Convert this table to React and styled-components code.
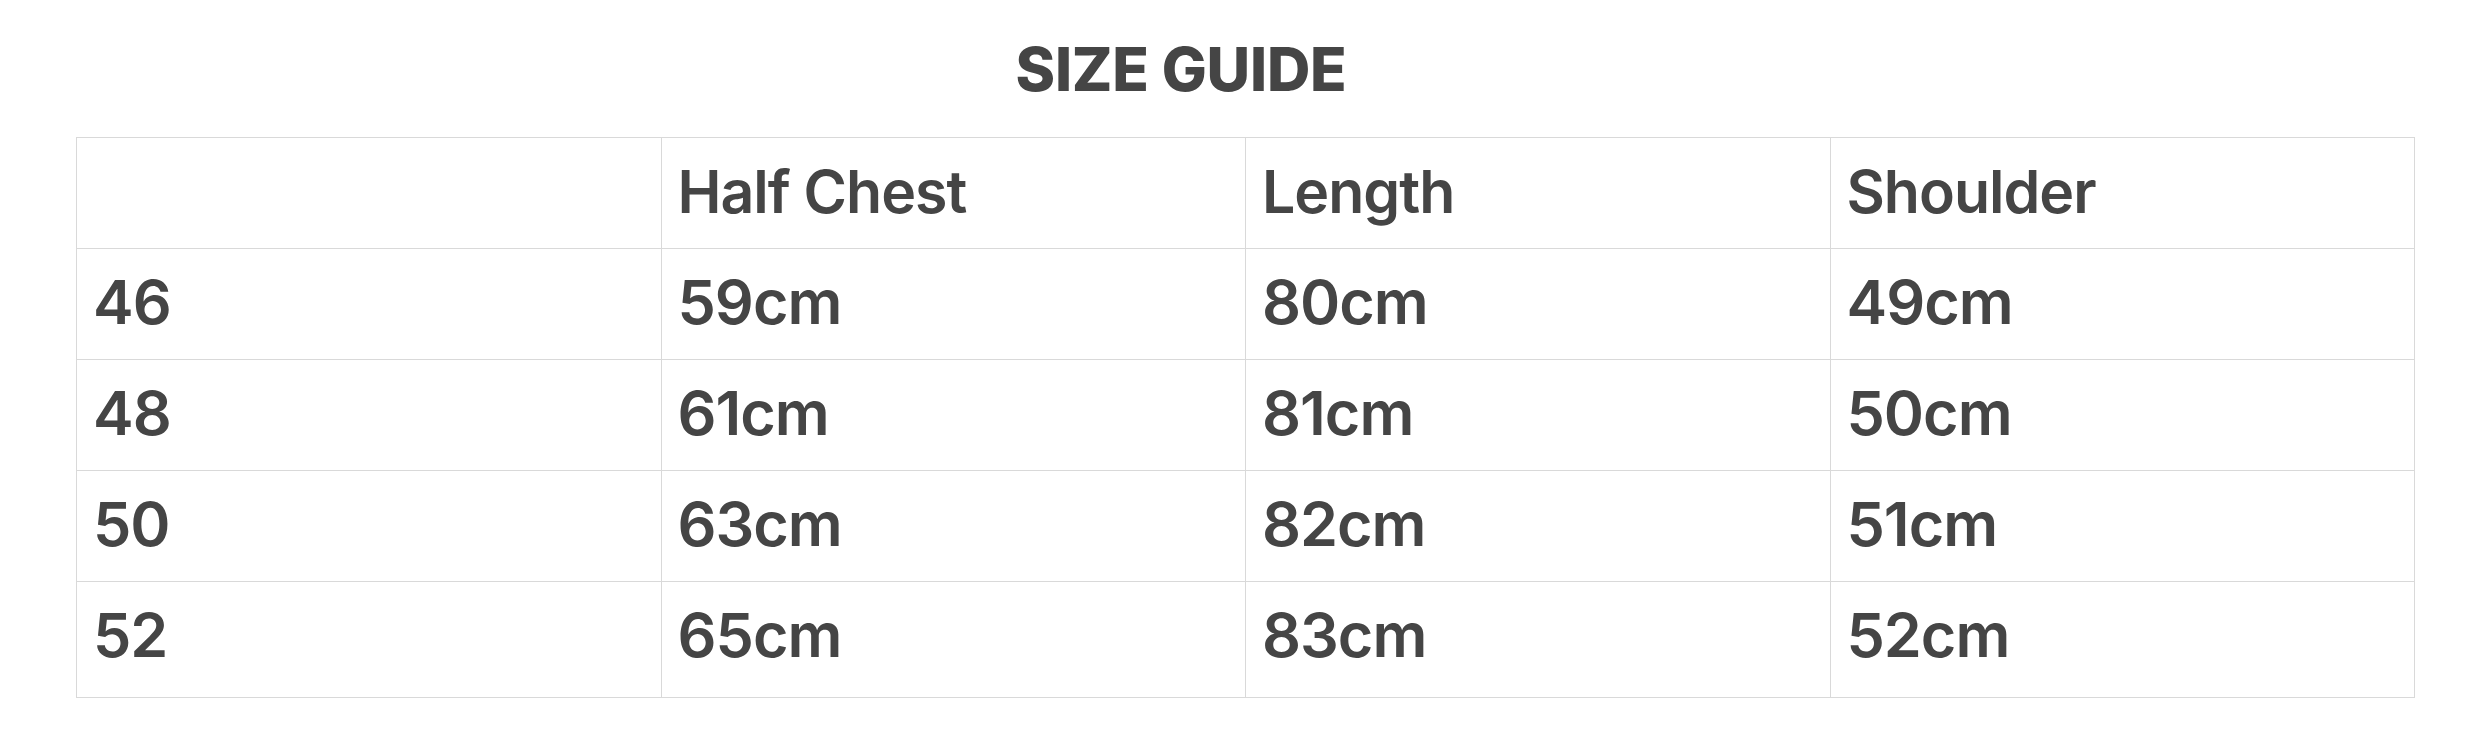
import React from "react";
import styled, { createGlobalStyle } from "styled-components";

const GlobalStyle = createGlobalStyle`
  body {
    margin: 0;
    background: #ffffff;
    font-family: "Inter", "Liberation Sans", sans-serif;
    color: #454545;
  }
`;

const Page = styled.div`
  width: 2481px;
  height: 746px;
  padding-left: 76px;
  box-sizing: border-box;
`;

const TitleBar = styled.div`
  width: 2210px;
  height: 137px;
  display: flex;
  align-items: flex-start;
  justify-content: center;
  box-sizing: border-box;
  padding-top: 33px;
`;

const Title = styled.h2`
  margin: 0;
  font-family: "Inter", sans-serif;
  font-weight: 800;
  font-size: 60px;
  line-height: 72px;
  letter-spacing: -0.2px;
  color: #454545;
`;

const Table = styled.table`
  width: 2339px;
  border-collapse: collapse;
  table-layout: fixed;
`;

const Cell = styled.td`
  border: 1px solid #d9d9d9;
  height: ${(p) => (p.$last ? 116 : 111)}px;
  padding: 0 0 ${(p) => (p.$last ? 8 : 4)}px 16px;
  box-sizing: border-box;
  font-family: "Inter", sans-serif;
  font-weight: 600;
  font-size: ${(p) => (p.$head ? 59 : 61)}px;
  line-height: 1;
  vertical-align: middle;
  color: #454545;
  letter-spacing: -1px;
`;

const headers = ["", "Half Chest", "Length", "Shoulder"];

const rows = [
  ["46", "59cm", "80cm", "49cm"],
  ["48", "61cm", "81cm", "50cm"],
  ["50", "63cm", "82cm", "51cm"],
  ["52", "65cm", "83cm", "52cm"],
];

const App = () => {
  return (
    <Page>
      <GlobalStyle />
      <TitleBar>
        <Title>SIZE GUIDE</Title>
      </TitleBar>
      <Table>
        <tbody>
          <tr>
            {headers.map((h, i) => (
              <Cell key={i} $head>
                {h}
              </Cell>
            ))}
          </tr>
          {rows.map((r, ri) => (
            <tr key={ri}>
              {r.map((c, ci) => (
                <Cell key={ci} $last={ri === rows.length - 1}>
                  {c}
                </Cell>
              ))}
            </tr>
          ))}
        </tbody>
      </Table>
    </Page>
  );
};

export default App;
